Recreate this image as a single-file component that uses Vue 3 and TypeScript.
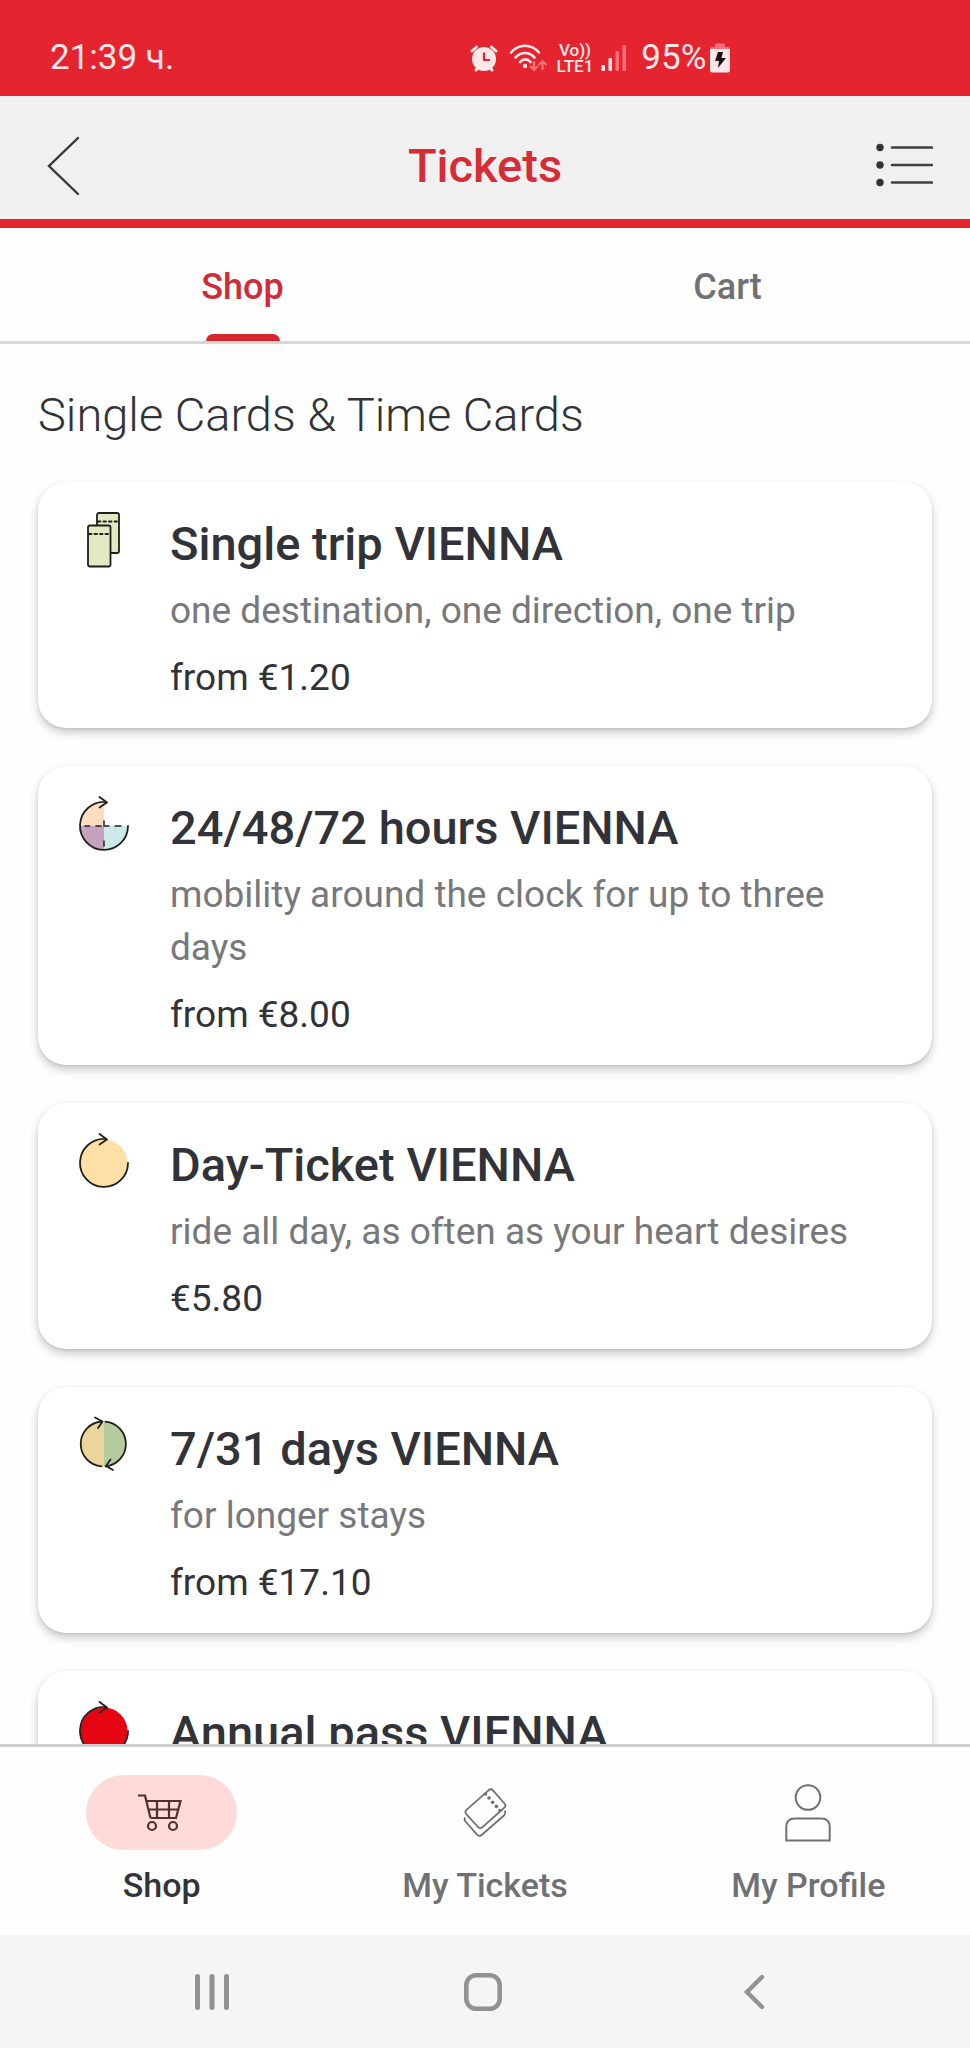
<script setup lang="ts">
import { ref } from 'vue'

type IconName = 'single' | 'hours' | 'day' | 'days' | 'annual'

interface Product {
  icon: IconName
  title: string
  description?: string
  price?: string
}

const products: Product[] = [
  { icon: 'single', title: 'Single trip VIENNA', description: 'one destination, one direction, one trip', price: 'from €1.20' },
  { icon: 'hours', title: '24/48/72 hours VIENNA', description: 'mobility around the clock for up to three days', price: 'from €8.00' },
  { icon: 'day', title: 'Day-Ticket VIENNA', description: 'ride all day, as often as your heart desires', price: '€5.80' },
  { icon: 'days', title: '7/31 days VIENNA', description: 'for longer stays', price: 'from €17.10' },
  { icon: 'annual', title: 'Annual pass VIENNA' },
]

const tabs = ['Shop', 'Cart']
const activeTab = ref('Shop')

const sections = ['Shop', 'My Tickets', 'My Profile']
const activeSection = ref('Shop')
</script>

<template>
  <div class="app">
    <div class="status">
      <span class="status-text">21:39 ч.</span>
      <div class="status-icons">
        <svg class="alarm" width="28" height="28" viewBox="0 0 28 28" aria-hidden="true">
          <path d="M2 7 6.500 3M26 7 21.500 3M6 26l3-3M22 26l-3-3" fill="none" stroke="#ffe6e8" stroke-width="3" stroke-linecap="round" />
          <circle cx="14" cy="15" r="12" fill="#ffe6e8" />
          <path d="M14 8.500V16h6" fill="none" stroke="#e4242f" stroke-width="2.200" />
        </svg>
        <svg class="wifi" width="38" height="28" viewBox="0 0 38 28" aria-hidden="true">
          <g fill="none" stroke="#ffe6e8" stroke-width="2.600" stroke-linecap="round">
            <path d="M2 8.500C10-.5 22-.5 30 8.500M6.500 13.500c5.500-6 13.500-6 19 0M11 18c3-3.500 7.500-3.500 10.500 0" />
          </g>
          <circle cx="16" cy="22" r="2.200" fill="#ffe6e8" />
          <path d="M25 17v9m-4-4 4 4 4-4M33.500 26v-9m-4 4 4-4 4 4" fill="none" stroke="#f9727a" stroke-width="2.200" />
        </svg>
        <span class="volte"><span>Vo))</span><span>LTE1</span></span>
        <svg class="signal" width="26" height="28" viewBox="0 0 26 28" aria-hidden="true">
          <rect x="0.500" y="21" width="3.500" height="6" rx="1" fill="#ffe6e8" />
          <rect x="7.500" y="14" width="3.500" height="13" rx="1" fill="#ffe6e8" />
          <rect x="14.500" y="7" width="3.500" height="20" rx="1" fill="#f9727a" />
          <rect x="21.500" y="1" width="3.500" height="26" rx="1" fill="#f9727a" />
        </svg>
        <span class="status-text">95%</span>
        <svg class="battery" width="20" height="30" viewBox="0 0 20 30" aria-hidden="true">
          <path d="M0 6a2 2 0 0 1 2-2h3V2a1.500 1.500 0 0 1 1.500-1.500h7A1.500 1.500 0 0 1 15 2v2h3a2 2 0 0 1 2 2z" fill="#f9727a" />
          <path d="M0 6h20v21a2.500 2.500 0 0 1-2.500 2.500h-15A2.500 2.500 0 0 1 0 27z" fill="#ffe6e8" />
          <path d="M8 9h5l-1.500 6H16L8 25l1-7H5z" fill="#1a1213" />
        </svg>
      </div>
    </div>

    <header class="header">
      <button class="icon-button back" type="button" aria-label="Back">
        <svg width="34" height="60" viewBox="0 0 34 60"><path d="M31 2 2 30l29 28" fill="none" stroke="#37383c" stroke-width="2.400" stroke-linecap="round" /></svg>
      </button>
      <h1>Tickets</h1>
      <button class="icon-button menu" type="button" aria-label="Menu">
        <svg width="57" height="46" viewBox="0 0 57 46">
          <g fill="#323338"><circle cx="4" cy="4.500" r="3.700" /><circle cx="4" cy="22" r="3.700" /><circle cx="4" cy="39.500" r="3.700" /></g>
          <path d="M16 4.500h40M16 22h40M16 39.500h40" stroke="#3f4044" stroke-width="2.600" stroke-linecap="round" />
        </svg>
      </button>
    </header>

    <nav class="tabs">
      <button
        v-for="tab in tabs"
        :key="tab"
        type="button"
        class="tab"
        :class="{ active: tab === activeTab }"
        @click="activeTab = tab"
      >{{ tab }}</button>
    </nav>

    <main class="shop">
      <h2>Single Cards &amp; Time Cards</h2>
      <div class="products">
        <a v-for="product in products" :key="product.title" href="#" class="card">
          <svg class="card-icon" viewBox="0 0 64 64" aria-hidden="true" fill="none" stroke="#1f1f1c" stroke-width="1.800" stroke-linecap="round" stroke-linejoin="round">
            <template v-if="product.icon === 'single'">
              <rect x="25" y="3" width="22" height="40" rx="2" fill="#e1ebc3" />
              <path d="M26 11.500h20" stroke-dasharray="2.500 3" />
              <rect x="16" y="15.500" width="22.500" height="41" rx="2" fill="#e1ebc3" />
              <path d="M17 24h20" stroke-dasharray="2.500 3" />
            </template>
            <template v-else-if="product.icon === 'hours'">
              <g stroke="none">
                <path d="M32 32H8A24 24 0 0 1 32 8z" fill="#fddcc0" />
                <path d="M32 32v24A24 24 0 0 1 8 32z" fill="#c4a3bf" />
                <path d="M32 32h24A24 24 0 0 1 32 56z" fill="#cde8e9" />
              </g>
              <path d="M13 32h4.500M24 32h5M32 27v5h5M43 32h6M32 47v5" stroke-width="1.500" />
              <path d="M34 8A24 24 0 1 0 56 32M27.500 3l7.500 5.500-7.500 5" />
            </template>
            <template v-else-if="product.icon === 'day'">
              <circle cx="32" cy="32" r="23.500" fill="#fedfa6" stroke="none" />
              <path d="M34 8A24 24 0 1 0 56 32M27.500 3l7.500 5.500-7.500 5" />
            </template>
            <template v-else-if="product.icon === 'days'">
              <g stroke="none">
                <path d="M31.500 6.500a22.500 22.500 0 0 0 0 45z" fill="#ead59c" />
                <path d="M31.500 6.500a22.500 22.500 0 0 1 0 45z" fill="#b4cb9d" />
              </g>
              <path d="M30 6.500A22.500 22.500 0 0 0 29.500 51.400M33.500 6.600A22.500 22.500 0 0 1 33.500 51.400M23 2.500l7.500 4L26 13M41 55l-7-4 4.500-6.500" />
            </template>
            <template v-else>
              <circle cx="32" cy="32" r="23.500" fill="#e50412" stroke="none" />
              <path d="M34 8A24 24 0 1 0 56 32M27.500 3l7.500 5.500-7.500 5" />
            </template>
          </svg>
          <div class="card-body">
            <h3>{{ product.title }}</h3>
            <p v-if="product.description" class="description">{{ product.description }}</p>
            <p v-if="product.price" class="price">{{ product.price }}</p>
          </div>
        </a>
      </div>
    </main>

    <nav class="bottom">
      <button
        v-for="section in sections"
        :key="section"
        type="button"
        class="section"
        :class="{ active: section === activeSection }"
        @click="activeSection = section"
      >
        <span class="pill">
          <svg v-if="section === 'Shop'" width="48" height="38" viewBox="0 0 48 38" fill="none" stroke="#50302f" stroke-width="2.200">
            <path d="M0 1.500h7L12.500 24M8 7h34.500L38 24H12.500M10.500 15.500h29.500M19 7v17M31 7v17" />
            <circle cx="14" cy="32" r="4" /><circle cx="35" cy="32" r="4" />
          </svg>
          <svg v-else-if="section === 'My Tickets'" width="44" height="50" viewBox="0 0 44 50" fill="none" stroke="#707174" stroke-width="1.800">
            <path d="M25.500 2.300q2.500-2.200 4.500 0L41.500 15.500q2 2.300-.3 4.300L19.500 39.200q-2.300 2-4.500-.2L3.300 26.200q-2-2.300.2-4.400z" />
            <path d="M2.200 29.500q-1.400 2 .3 4L14 46.700q2.300 2.300 4.600.3L41 27.500q1.800-1.800 1-5" />
            <g fill="#707174" stroke="none"><circle cx="22.500" cy="6" r="1.800" /><circle cx="26" cy="10" r="1.800" /><circle cx="29.700" cy="14.200" r="1.800" /><circle cx="33.400" cy="18.400" r="1.800" /><circle cx="37" cy="22.500" r="1.800" /></g>
          </svg>
          <svg v-else width="48" height="60" viewBox="0 0 48 60" fill="none" stroke="#707174" stroke-width="2">
            <circle cx="24" cy="14.500" r="12.300" />
            <path d="M2.300 57.500V44q0-8.500 8.500-8.500h26.400q8.500 0 8.500 8.500v13.500z" />
          </svg>
        </span>
        <span class="section-label">{{ section }}</span>
      </button>
    </nav>

    <div class="system">
      <button type="button" aria-label="Recent apps">
        <svg width="36" height="38" viewBox="0 0 36 38"><path d="M3.500 3.500v31M18 3.500v31M32.500 3.500v31" stroke="#929292" stroke-width="5" stroke-linecap="round" /></svg>
      </button>
      <button type="button" aria-label="Home">
        <svg width="38" height="38" viewBox="0 0 38 38"><rect x="2.300" y="2.300" width="33.400" height="33.400" rx="10" fill="none" stroke="#929292" stroke-width="4.600" /></svg>
      </button>
      <button type="button" aria-label="System back">
        <svg width="22" height="38" viewBox="0 0 22 38"><path d="M19 4 4 19l15 15" fill="none" stroke="#929292" stroke-width="4.400" stroke-linecap="round" /></svg>
      </button>
    </div>
  </div>
</template>

<style>
body {
  background: #fefefe;
}
</style>

<style scoped>
.app {
  display: flex;
  flex-direction: column;
  height: 100vh;
  overflow: hidden;
  background: #fefefe;
  color: #323338;
  font-family: Roboto, "Noto Sans", sans-serif;
}

button {
  padding: 0;
  border: 0;
  background: none;
  color: inherit;
  font: inherit;
  cursor: pointer;
}

svg {
  display: block;
}

h1,
h2,
h3,
p {
  margin: 0;
}

.status {
  flex: none;
  display: grid;
  grid-template-columns: 48% 1fr;
  align-items: center;
  height: 76px;
  padding-top: 20px;
  background: #e4242f;
  color: #ffe6e8;
}

.status-text {
  font-size: 35px;
  line-height: 40px;
}

.status > .status-text {
  padding-left: 50px;
}

.status-icons {
  display: flex;
  align-items: center;
  padding-left: 4px;
}

.wifi {
  margin-left: 11px;
}

.volte {
  display: flex;
  flex-direction: column;
  align-items: center;
  margin-left: 10px;
  font-size: 17px;
  font-weight: 500;
  line-height: 16px;
}

.signal {
  margin: 0 14px 0 8px;
}

.battery {
  margin-left: 4px;
}

.header {
  flex: none;
  display: grid;
  grid-template-columns: 1fr auto 1fr;
  align-items: center;
  height: 106px;
  padding: 17px 37px 0;
  border-bottom: 9px solid #e4252f;
  background: #f0f0f0;
}

.back {
  justify-self: start;
  padding-left: 10px;
}

.menu {
  justify-self: end;
}

.header h1 {
  color: #d52c36;
  font-size: 47px;
  font-weight: 500;
  line-height: 56px;
}

.tabs {
  flex: none;
  display: grid;
  grid-template-columns: 1fr 1fr;
  border-bottom: 3px solid #d8d8d8;
}

.tab {
  position: relative;
  height: 113px;
  padding-top: 4px;
  color: #707174;
  font-size: 36px;
  font-weight: 500;
}

.tab.active {
  color: #cd2c38;
}

.tab.active::after {
  content: "";
  position: absolute;
  bottom: 0;
  left: calc(50% - 37px);
  width: 74px;
  height: 7px;
  border-radius: 7px 7px 0 0;
  background: #d8262f;
}

.shop {
  flex: 1;
  min-height: 0;
  padding: 43px 38px 0;
  overflow: hidden;
}

.shop h2 {
  margin-bottom: 39px;
  font-size: 47px;
  font-weight: 300;
  line-height: 56px;
}

.products {
  display: flex;
  flex-direction: column;
  gap: 38px;
}

.card {
  display: flex;
  align-items: flex-start;
  gap: 34px;
  padding: 28px 34px 24px;
  border-radius: 28px;
  background: #fff;
  box-shadow: 0 5px 10px rgba(0, 0, 0, 0.2), 0 1px 3px rgba(0, 0, 0, 0.1);
  color: inherit;
  text-decoration: none;
}

.card-icon {
  flex: none;
  width: 64px;
  height: 64px;
}

.card-body {
  flex: 1;
  padding-top: 6px;
}

.card h3 {
  margin-bottom: 12px;
  font-size: 47px;
  font-weight: 500;
  line-height: 56px;
}

.card p {
  font-size: 37px;
  line-height: 53px;
}

.card .description {
  margin-bottom: 14px;
  color: #77787b;
}

.bottom {
  flex: none;
  display: grid;
  grid-template-columns: repeat(3, 1fr);
  padding: 28px 0;
  border-top: 3px solid #cfcfcf;
  background: #fefefe;
}

.section {
  display: flex;
  flex-direction: column;
  align-items: center;
  gap: 13px;
  color: #707174;
}

.section.active {
  color: #323338;
}

.pill {
  display: flex;
  align-items: center;
  justify-content: center;
  width: 151px;
  height: 75px;
  border-radius: 38px;
}

.section.active .pill {
  background: #fedad8;
}

.section-label {
  font-size: 34px;
  font-weight: 500;
  line-height: 44px;
}

.system {
  flex: none;
  display: grid;
  grid-template-columns: repeat(3, 1fr);
  align-items: center;
  height: 113px;
  padding: 0 80px 0 76px;
  background: #f5f5f5;
}

.system button {
  display: flex;
  justify-content: center;
}
</style>
